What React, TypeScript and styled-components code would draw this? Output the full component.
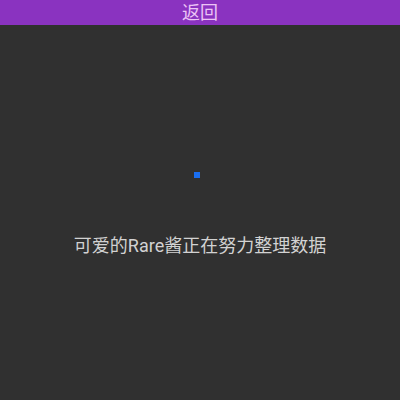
import React from 'react';
import styled, { createGlobalStyle } from 'styled-components';

const GlobalStyle = createGlobalStyle`
  html, body {
    margin: 0;
    padding: 0;
    background: #303030;
  }
  body {
    font-family: Roboto, "Noto Sans CJK SC", sans-serif;
  }
`;

const Page = styled.div`
  width: 400px;
  height: 400px;
  display: flex;
  flex-direction: column;
  background: #303030;
`;

const Header = styled.div`
  height: 25px;
  flex-shrink: 0;
  background: #8a33c0;
  display: flex;
  align-items: center;
  justify-content: center;
`;

const BackText = styled.span`
  color: #ecc3f5;
  font-size: 18px;
  line-height: 25px;
`;

const Body = styled.div`
  display: flex;
  flex-direction: column;
  align-items: center;
  padding-top: 147px;
`;

const Spinner = styled.div`
  width: 6px;
  height: 6px;
  margin-right: 6px;
  background: #1a6ef0;
`;

const Message = styled.div`
  margin-top: 56px;
  color: #d2d2d2;
  font-size: 18px;
  line-height: 24px;
`;

export default function App() {
  return (
    <Page>
      <GlobalStyle />
      <Header>
        <BackText>返回</BackText>
      </Header>
      <Body>
        <Spinner />
        <Message>可爱的Rare酱正在努力整理数据</Message>
      </Body>
    </Page>
  );
}
